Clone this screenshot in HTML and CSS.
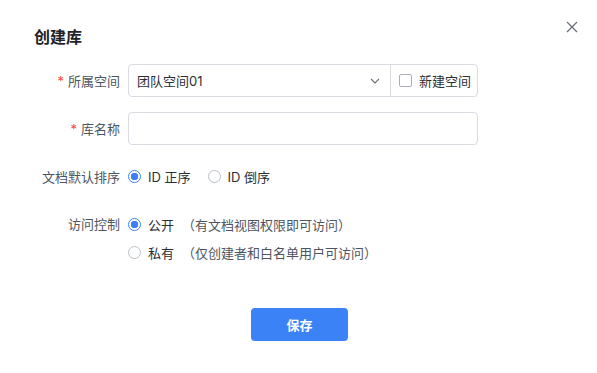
FILE: index.html
```html
<!DOCTYPE html>
<html lang="zh-CN">
<head>
    <meta charset="UTF-8">
    <meta name="viewport" content="width=device-width, initial-scale=1.0">
    <title>创建库</title>
    <link rel="stylesheet" href="styles.css">
</head>
<body>
    <div class="dialog">
        <button class="close-button" aria-label="关闭">
            <svg width="12" height="12" viewBox="0 0 12 12"><path d="M1 1L11 11M11 1L1 11" stroke="#6b6f76" stroke-width="1.3" fill="none"/></svg>
        </button>
        <h1 class="dialog-title">创建库</h1>

        <form class="form">
            <div class="form-row">
                <label class="form-label"><span class="required">*</span>所属空间</label>
                <div class="form-control">
                    <div class="select-group">
                        <div class="select">
                            <span>团队空间01</span>
                            <svg width="10" height="6" viewBox="0 0 10 6"><path d="M1 1L5 5L9 1" stroke="#6b6f76" stroke-width="1.1" fill="none"/></svg>
                        </div>
                        <label class="addon">
                            <span class="checkbox"></span>
                            新建空间
                        </label>
                    </div>
                </div>
            </div>

            <div class="form-row">
                <label class="form-label"><span class="required">*</span>库名称</label>
                <div class="form-control">
                    <input type="text" class="text-input">
                </div>
            </div>

            <div class="form-row">
                <label class="form-label">文档默认排序</label>
                <div class="form-control radio-inline">
                    <label class="radio"><span class="radio-dot checked"></span>ID 正序</label>
                    <label class="radio"><span class="radio-dot"></span>ID 倒序</label>
                </div>
            </div>

            <div class="form-row access-row">
                <label class="form-label">访问控制</label>
                <div class="form-control radio-stack">
                    <label class="radio"><span class="radio-dot checked"></span>公开<span class="hint">（有文档视图权限即可访问）</span></label>
                    <label class="radio"><span class="radio-dot"></span>私有<span class="hint">（仅创建者和白名单用户可访问）</span></label>
                </div>
            </div>

            <div class="actions">
                <button type="button" class="save-button">保存</button>
            </div>
        </form>
    </div>
</body>
</html>
```

FILE: styles.css
```css
body {
    margin: 0;
    background-color: #ffffff;
    font-family: Inter, "Noto Sans CJK SC", sans-serif;
    color: #1f2329;
}
.dialog {
    position: relative;
    width: 597px;
    height: 373px;
    box-sizing: border-box;
    padding: 25px 34px 0 34px;
}
.close-button {
    position: absolute;
    top: 21px;
    right: 19px;
    width: 12px;
    height: 12px;
    padding: 0;
    border: none;
    background: none;
    display: flex;
}
.dialog-title {
    margin: 0 0 15px 0;
    font-size: 16px;
    line-height: 24px;
    font-weight: 700;
    color: #1f2329;
}
.form {
    display: flex;
    flex-direction: column;
}
.form-row {
    display: flex;
    align-items: center;
    gap: 8px;
    height: 33px;
    margin-bottom: 15px;
}
.form-label {
    width: 86px;
    flex-shrink: 0;
    text-align: right;
    font-size: 13px;
    color: #4e5562;
    white-space: nowrap;
}
.required {
    color: #f5484a;
    margin-right: 4px;
}
.form-control {
    width: 350px;
    font-size: 13px;
}
.select-group {
    display: flex;
    height: 33px;
    border: 1px solid #d9dbe3;
    border-radius: 4px;
    box-sizing: border-box;
}
.select {
    flex: 1;
    display: flex;
    align-items: center;
    justify-content: space-between;
    padding: 0 10px 0 8px;
    color: #2b2f36;
}
.addon {
    width: 87px;
    border-left: 1px solid #d9dbe3;
    display: flex;
    align-items: center;
    gap: 7px;
    padding-left: 8px;
    box-sizing: border-box;
    color: #2b2f36;
}
.checkbox {
    width: 11px;
    height: 11px;
    border: 1px solid #a9aeb8;
    border-radius: 2px;
}
.text-input {
    width: 100%;
    height: 33px;
    border: 1px solid #d9dbe3;
    border-radius: 4px;
    box-sizing: border-box;
    font-size: 13px;
}
.radio-inline {
    display: flex;
    gap: 17px;
}
.radio {
    display: flex;
    align-items: center;
    gap: 7px;
    color: #2b2f36;
    white-space: nowrap;
}
.radio-dot {
    width: 13px;
    height: 13px;
    box-sizing: border-box;
    border: 1px solid #b9bec8;
    border-radius: 50%;
}
.radio-dot.checked {
    border-color: #3b82f6;
    background: radial-gradient(circle, #3b82f6 0 3.5px, #ffffff 4px);
}
.hint {
    color: #4e5562;
    margin-left: 1px;
}
.access-row {
    height: auto;
    align-items: flex-start;
    margin-top: 2px;
    margin-bottom: 0;
}
.access-row .form-label {
    line-height: 28px;
}
.radio-stack {
    display: flex;
    flex-direction: column;
}
.radio-stack .radio {
    height: 28px;
}
.actions {
    display: flex;
    justify-content: center;
    margin-top: 42px;
    padding-left: 2px;
}
.save-button {
    width: 97px;
    height: 33px;
    border: none;
    border-radius: 4px;
    background-color: #3b82f6;
    color: #ffffff;
    font-size: 13px;
    font-weight: 600;
    font-family: inherit;
}
```
